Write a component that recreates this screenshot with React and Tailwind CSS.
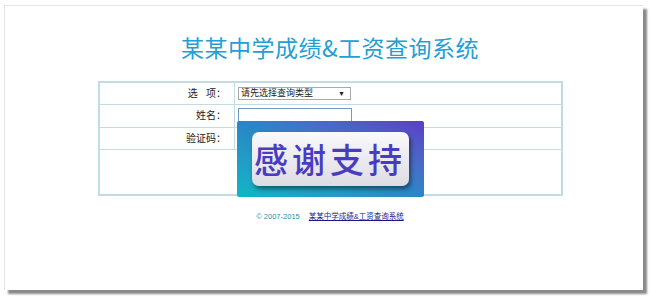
import React from 'react';

export default function App() {
  return (
    <div className="w-[650px] h-[297px] bg-white pt-[5px] pl-[4px] font-['Liberation_Sans','Noto_Sans_CJK_SC',sans-serif]">
      <div className="w-[639px] h-[285px] bg-white border-t border-l border-[#e4e4e4] shadow-[4px_4px_2px_#8a8a8a] pl-[12px] flex flex-col items-center">
        <h1 className="mt-[29px] text-[23px] leading-[24px] text-[#239fd6] font-['Noto_Sans_CJK_SC',serif] font-normal tracking-[0.5px]">
          某某中学成绩&amp;工资查询系统
        </h1>

        <div className="relative mt-[22px]">
          <table className="w-[465px] border-collapse border-2 border-[#c3dce4] text-[10px] text-[#222]">
            <tbody>
              <tr className="h-[22px]">
                <td className="w-[136px] border border-[#c3dce4] text-right pr-[8px]">选&nbsp;&nbsp;&nbsp;项：</td>
                <td className="border border-[#c3dce4] pl-[3px]">
                  <div className="w-[113px] h-[13px] border border-[#a9a9a9] flex items-center justify-between px-[2px] text-[9px] leading-none bg-white">
                    <span>请先选择查询类型</span>
                    <span className="text-[7px] pr-[3px]">▼</span>
                  </div>
                </td>
              </tr>
              <tr className="h-[23px]">
                <td className="border border-[#c3dce4] text-right pr-[8px]">姓名：</td>
                <td className="border border-[#c3dce4] pl-[3px] align-bottom">
                  <div className="w-[114px] h-[19px] border border-[#6f9fc0] bg-white" />
                </td>
              </tr>
              <tr className="h-[22px]">
                <td className="border border-[#c3dce4] text-right pr-[8px]">验证码：</td>
                <td className="border border-[#c3dce4]" />
              </tr>
              <tr className="h-[46px]">
                <td colSpan={2} className="border border-[#c3dce4]" />
              </tr>
            </tbody>
          </table>

          <div className="absolute left-[139px] top-[40px] w-[187px] h-[76px] rounded-[2px] bg-gradient-to-tr from-[#0fb6c4] via-[#2a86c6] to-[#5a3cc6] flex items-center justify-center">
            <div className="w-[157px] h-[54px] rounded-[7px] bg-gradient-to-b from-[#fafafc] to-[#dcdce2] shadow-[2px_3px_4px_rgba(0,0,0,0.45)] flex items-center justify-center">
              <span className="text-[34px] leading-none font-medium text-[#4a3cc0] tracking-[4px] font-['Noto_Sans_CJK_SC',sans-serif]">感谢支持</span>
            </div>
          </div>
        </div>

        <div className="mt-[15px] text-[7.5px] flex items-center gap-[9px]">
          <span className="text-[#1f8fb2]">© 2007-2015</span>
          <span className="text-[#1a1a8a] underline">某某中学成绩&amp;工资查询系统</span>
        </div>
      </div>
    </div>
  );
}
